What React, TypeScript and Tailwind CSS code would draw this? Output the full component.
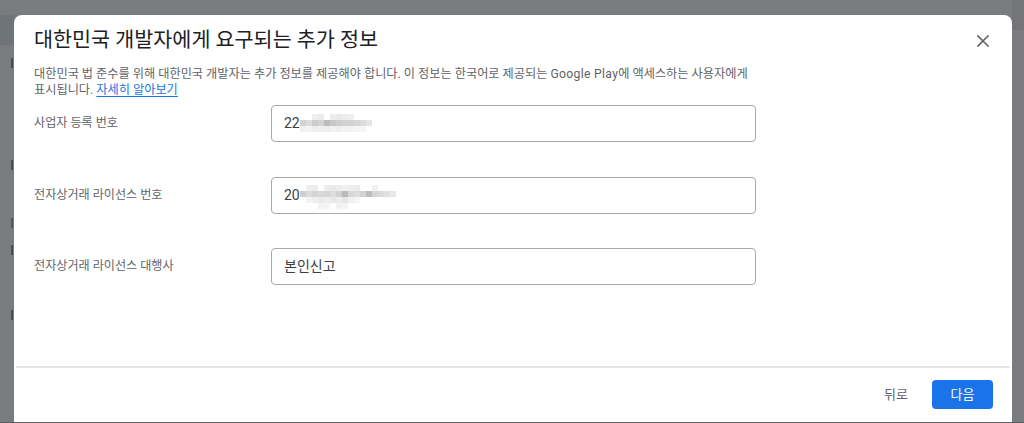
import React from "react";

const FONT = '"Roboto","Noto Sans CJK KR","Noto Sans",sans-serif';

type Cell = string;

function Mosaic({ rows, cell = 6 }: { rows: Cell[][]; cell?: number }) {
  const w = rows[0].length * cell;
  const h = rows.length * cell;
  return (
    <svg width={w} height={h} viewBox={`0 0 ${w} ${h}`} className="block">
      <defs>
        <filter id="mb" x="-10%" y="-10%" width="120%" height="120%">
          <feGaussianBlur stdDeviation="0.7" />
        </filter>
      </defs>
      <g filter="url(#mb)">
        {rows.map((r, y) =>
          r.map((c, x) => (
            <rect key={`${x}-${y}`} x={x * cell} y={y * cell} width={cell} height={cell} fill={c} />
          ))
        )}
      </g>
    </svg>
  );
}

const W = "#ffffff";
const m1: Cell[][] = [
  [W, W, "#eeeeee", "#ebebeb", W, "#ededed", "#e8e8e8", "#ececec", "#efefef", W, W, W],
  ["#d2d2d2", "#dcdcdc", "#cbcbcb", "#d3d3d3", "#bdbdbd", "#c8c8c8", "#cfcfcf", "#d2d2d2", "#d1d1d1", "#d6d6d6", "#dcdcdc", "#e4e4e4"],
  ["#f1f1f1", "#f4f4f4", "#ececec", "#efefef", "#ededed", "#f2f2f2", "#efefef", "#f3f3f3", "#f2f2f2", "#f5f5f5", "#f6f6f6", W],
];
const m2: Cell[][] = [
  [W, "#eeeeee", "#ebebeb", W, "#ededed", "#eaeaea", "#eeeeee", "#f0f0f0", "#efefef", "#ececec", W, W, "#f1f1f1", W, W, W, W],
  ["#cfcfcf", "#dadada", "#d3d3d3", "#d9d9d9", "#d5d5d5", "#dddddd", "#d1d1d1", "#b9b9b9", "#d7d7d7", "#dcdcdc", "#d2d2d2", "#bcbcbc", "#d5d5d5", "#dadada", "#e0e0e0", "#e8e8e8", W],
  [W, "#f3f3f3", "#efefef", "#eaeaea", "#eeeeee", "#e8e8e8", "#ececec", "#e6e6e6", "#f0f0f0", "#f5f5f5", W, W, W, W, W, W, W],
  [W, W, W, "#f3f3f3", "#f4f4f4", W, "#f2f2f2", "#f4f4f4", W, W, W, W, W, W, W, W, W],
];

function Field({ children }: { children: React.ReactNode }) {
  return (
    <div className="flex h-[37px] w-[485px] items-center rounded-[4px] border border-[#a7a9ac] pl-[12px] text-[14px] text-[#3c4043]">
      {children}
    </div>
  );
}

function Row({ label, children }: { label: string; children: React.ReactNode }) {
  return (
    <div className="flex items-center">
      <div className="w-[237px] text-[12.1px] text-[#5f6368]">{label}</div>
      <Field>{children}</Field>
    </div>
  );
}

export default function App() {
  return (
    <div
      className="relative flex h-[423px] w-[1024px] flex-col overflow-hidden bg-[#7a7b7e]"
      style={{ fontFamily: FONT }}
    >
      {/* underlying page hints */}
      <div className="absolute left-0 top-[15px] h-[30px] w-[14px] bg-[#6f747b]" />
      <div className="absolute right-0 top-0 h-[30px] w-[12px] bg-[#747578]" />
      <div className="absolute left-[11px] top-[58px] h-[10px] w-[2px] bg-[#4b4c4f]" />
      <div className="absolute left-[11px] top-[160px] h-[10px] w-[2px] bg-[#4b4c4f]" />
      <div className="absolute left-[11px] top-[218px] h-[10px] w-[2px] bg-[#55565a]" />
      <div className="absolute left-[11px] top-[245px] h-[10px] w-[2px] bg-[#4b4c4f]" />
      <div className="absolute left-[11px] top-[310px] h-[10px] w-[2px] bg-[#4b4c4f]" />

      <div className="ml-[14px] mt-[15px] flex h-[408px] w-[998px] flex-col rounded-t-[8px] bg-white">
        {/* header */}
        <div className="flex items-start justify-between pl-[20px] pr-[23px] pt-[11px]">
          <h1 className="text-[20.7px] font-normal leading-[28px] text-[#202124]">
            대한민국 개발자에게 요구되는 추가 정보
          </h1>
          <button className="mt-[9px] flex h-[12px] w-[12px] items-center justify-center text-[#5f6368]" aria-label="닫기">
            <svg width="12" height="12" viewBox="0 0 12 12">
              <path d="M1 1 L11 11 M11 1 L1 11" stroke="currentColor" strokeWidth="1.6" strokeLinecap="square" />
            </svg>
          </button>
        </div>

        <p className="mt-[12px] whitespace-nowrap pl-[20px] text-[12.2px] leading-[16px] text-[#5f6368]">
          대한민국 법 준수를 위해 대한민국 개발자는 추가 정보를 제공해야 합니다. 이 정보는 한국어로 제공되는{" "}
          <span className="tracking-[0.3px]">Google Play</span>에 액세스하는 사용자에게
          <br />
          표시됩니다.{" "}
          <a className="text-[#1a73e8] underline underline-offset-2">자세히 알아보기</a>
        </p>

        <div className="mt-[7px] flex flex-col gap-[34.5px] pl-[20px]">
          <Row label="사업자 등록 번호">
            <span>22</span>
            <span className="-mt-[2px]">
              <Mosaic rows={m1} />
            </span>
          </Row>
          <Row label="전자상거래 라이선스 번호">
            <span>20</span>
            <span className="mt-[4px]">
              <Mosaic rows={m2} />
            </span>
          </Row>
          <Row label="전자상거래 라이선스 대행사">
            <span>본인신고</span>
          </Row>
        </div>

        <div className="flex-1" />
        <div className="mx-[2px] h-[2px] bg-[#e6e6e6]" />

        <div className="flex items-center justify-end pb-[14px] pr-[19px] pt-[12px]">
          <button className="mr-[24px] text-[13px] text-[#5f6368]">뒤로</button>
          <button className="flex h-[29px] w-[61px] items-center justify-center rounded-[4px] bg-[#1a73e8] text-[13px] text-white">
            다음
          </button>
        </div>
      </div>
      <div className="absolute bottom-0 left-0 h-[1px] w-full bg-[#5c5d60]" />
    </div>
  );
}
